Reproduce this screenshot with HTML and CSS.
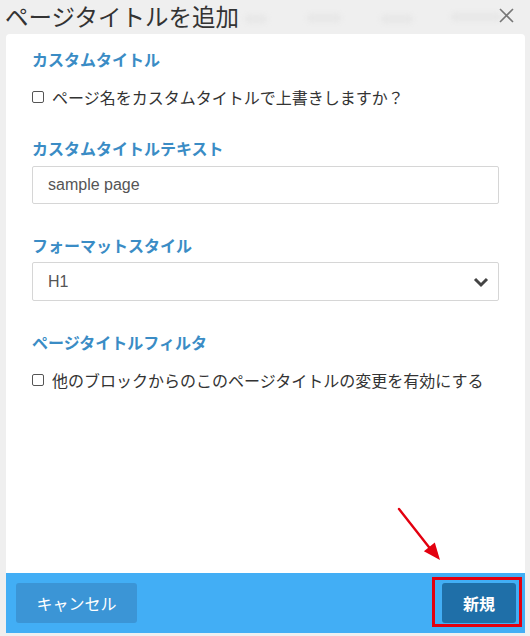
FILE: index.html
```html
<!DOCTYPE html>
<html lang="ja">
<head>
<meta charset="utf-8">
<title>ページタイトルを追加</title>
<link rel="stylesheet" href="styles.css">
</head>
<body>
<div class="header">
  <h1 class="title">ページタイトルを追加</h1>
  <div class="ghost"><span class="g1"></span><span class="g2"></span><span class="g3"></span><span class="g4"></span></div>
  <button class="close" aria-label="閉じる">
    <svg width="15" height="15" viewBox="0 0 15 15"><path d="M1 1L14 14M14 1L1 14" stroke="#777" stroke-width="1.6" fill="none"/></svg>
  </button>
</div>
<div class="panel">
  <div class="body">
    <div class="field first">
      <h2 class="label">カスタムタイトル</h2>
      <label class="check"><input type="checkbox"><span>ページ名をカスタムタイトルで上書きしますか？</span></label>
    </div>
    <div class="field">
      <h2 class="label">カスタムタイトルテキスト</h2>
      <input class="text-input" type="text" value="sample page">
    </div>
    <div class="field">
      <h2 class="label">フォーマットスタイル</h2>
      <div class="select-wrap">
        <select class="select"><option>H1</option></select>
        <svg class="chevron" width="16" height="12" viewBox="0 0 16 12"><path d="M2 3L8 9L14 3" stroke="#444" stroke-width="3" fill="none"/></svg>
      </div>
    </div>
    <div class="field">
      <h2 class="label">ページタイトルフィルタ</h2>
      <label class="check"><input type="checkbox"><span>他のブロックからのこのページタイトルの変更を有効にする</span></label>
    </div>
    <svg class="arrow" width="50" height="62" viewBox="0 0 50 62">
      <path d="M4 7L37 49" stroke="#e3000f" stroke-width="2.4" fill="none" stroke-linecap="round"/>
      <polygon points="45,58 28.9,49.2 39.8,40.4" fill="#e3000f"/>
    </svg>
  </div>
  <div class="footer">
    <button class="btn cancel">キャンセル</button>
    <div class="save-wrap">
      <button class="btn save">新規</button>
    </div>
  </div>
</div>
</body>
</html>
```
FILE: styles.css
```css
html, body {
  margin: 0;
  padding: 0;
}
body {
  width: 530px;
  height: 636px;
  background: #efefef;
  font-family: "Noto Sans CJK JP", "Noto Sans", sans-serif;
  overflow: hidden;
}
.header {
  position: relative;
  height: 34px;
  display: flex;
  align-items: flex-start;
  padding: 1px 16px 0 5px;
  box-sizing: border-box;
}
.title {
  margin: 0;
  font-size: 23.5px;
  line-height: 30px;
  font-weight: 400;
  color: #333;
  flex: 1;
  position: relative;
  z-index: 1;
}
.ghost {
  position: absolute;
  left: 245px;
  top: 10px;
  display: flex;
  filter: blur(2.5px);
}
.ghost span {
  display: block;
  height: 8px;
  border-radius: 4px;
  background: #e7e7e7;
}
.ghost .g1 { width: 22px; margin-top: 5px; }
.ghost .g2 { width: 34px; margin-left: 40px; margin-top: 4px; }
.ghost .g3 { width: 32px; margin-left: 40px; margin-top: 5px; }
.ghost .g4 { width: 50px; margin-left: 38px; margin-top: 3px; }
.close {
  border: 0;
  background: transparent;
  padding: 0;
  margin-top: 7px;
  width: 15px;
  height: 15px;
  display: block;
  position: relative;
  z-index: 1;
}
.close svg { display: block; }
.panel {
  margin: 0 5px 0 6px;
  height: 599px;
  background: #fff;
  border-radius: 4px 4px 0 0;
  display: flex;
  flex-direction: column;
}
.body {
  position: relative;
  flex: 1;
  padding: 14px 26px 0;
}
.field { margin-top: 28px; }
.field.first { margin-top: 0; }
.field + .field + .field { margin-top: 30px; }
.label {
  margin: 0;
  font-size: 16px;
  line-height: 23px;
  font-weight: 700;
  color: #3a8cc5;
}
.check {
  display: flex;
  align-items: center;
  margin-top: 14px;
  height: 24px;
  font-size: 16px;
  color: #333;
}
.check input {
  appearance: none;
  -webkit-appearance: none;
  width: 12px;
  height: 12px;
  margin: 0 8px 0 0;
  border: 1px solid #555;
  border-radius: 2px;
  background: #fff;
  box-sizing: border-box;
}
.text-input {
  display: block;
  margin-top: 6px;
  width: 100%;
  height: 38px;
  box-sizing: border-box;
  border: 1px solid #d6d6d6;
  border-radius: 2px;
  padding: 0 15px;
  font-family: "Liberation Sans", Arial, sans-serif;
  font-size: 16px;
  color: #555;
  outline: none;
}
.select-wrap {
  position: relative;
  margin-top: 5px;
}
.select {
  appearance: none;
  -webkit-appearance: none;
  display: block;
  width: 100%;
  height: 39px;
  box-sizing: border-box;
  border: 1px solid #d6d6d6;
  border-radius: 2px;
  padding: 0 15px;
  background: #fff;
  font-family: "Liberation Sans", Arial, sans-serif;
  font-size: 16px;
  color: #555;
}
.chevron {
  position: absolute;
  right: 10px;
  top: 14px;
  pointer-events: none;
}
.arrow {
  position: absolute;
  left: 389px;
  top: 468px;
}
.footer {
  height: 60px;
  background: #42aef5;
  display: flex;
  align-items: center;
  justify-content: space-between;
  padding: 0 9px 0 10px;
}
.btn {
  height: 40px;
  border: 0;
  border-radius: 3px;
  color: #fff;
  font-family: "Noto Sans CJK JP", sans-serif;
  font-size: 16px;
  padding: 0;
}
.cancel {
  width: 121px;
  background: #3b95d6;
  font-weight: 400;
}
.save-wrap {
  position: relative;
}
.save-wrap::after {
  content: "";
  position: absolute;
  left: -10px;
  right: -6px;
  top: -6px;
  bottom: -4px;
  border: 3px solid #e3000f;
  pointer-events: none;
}
.save {
  display: block;
  width: 74px;
  background: #1f6fa8;
  font-weight: 700;
}
```
